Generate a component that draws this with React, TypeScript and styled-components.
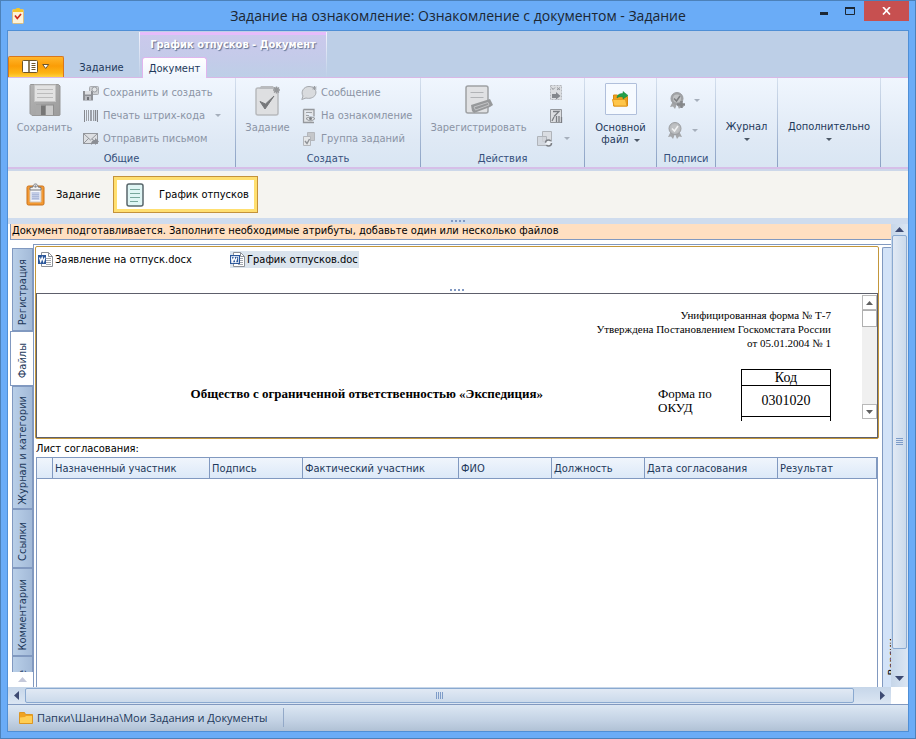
import React from 'react';
import styled, { createGlobalStyle, css } from 'styled-components';

const UI = '"DejaVu Sans Condensed", "DejaVu Sans", Tahoma, sans-serif';
const TITLE = '"Open Sans", "Segoe UI", sans-serif';
const DOC = '"Liberation Serif", "Times New Roman", serif';
const LINE = '#8199c0';
const INK = '#1e395b';
const MUTED = '#8b94a5';

const GlobalStyle = createGlobalStyle`
  * { box-sizing: border-box; }
  body { margin: 0; font: 11px/14px ${UI}; color: #000; }
  button { font: inherit; color: inherit; background: none; border: 0; padding: 0; margin: 0; text-align: center; }
  svg { display: block; flex: none; }
`;

/* Window */
const Window = styled.div`
  display: flex;
  flex-direction: column;
  height: 100vh;
  min-height: 480px;
  padding: 0 6px 6px;
  border: 1px solid #4c81b9;
  background: #6aacf7;
`;
const TitleBar = styled.header`
  display: grid;
  grid-template-columns: 1fr auto 1fr;
  height: 29px;
  flex: none;
`;
const TitleIcon = styled.div`
  padding: 6px 0 0 5px;
`;
const Title = styled.h1`
  margin: 0;
  font: 14px/29px ${TITLE};
  color: #1c2733;
  white-space: nowrap;
`;
const WindowButtons = styled.div`
  display: flex;
  justify-content: flex-end;
  align-items: flex-start;
`;
const WindowButton = styled.button<{ $close?: boolean }>`
  display: flex;
  align-items: center;
  justify-content: center;
  width: ${p => (p.$close ? 45 : 27)}px;
  height: 20px;
  background: ${p => (p.$close ? '#c75050' : 'transparent')};
`;
const Client = styled.div`
  flex: 1;
  min-height: 0;
  display: flex;
  flex-direction: column;
  border: 1px solid #4f8fd6;
  background: #fff;
`;

/* Ribbon */
const TabStrip = styled.div`
  display: flex;
  align-items: flex-end;
  flex: none;
  height: 47px;
  background: #bdcfe7;
  border-bottom: 1px solid #d9b8e6;
`;
const AppButton = styled.button`
  display: flex;
  align-items: center;
  justify-content: center;
  gap: 3px;
  width: 56px;
  height: 21px;
  border: 1px solid #d9761b;
  border-bottom: 0;
  border-radius: 2px 2px 0 0;
  background: linear-gradient(#ffb62b 0%, #fb9d06 45%, #fdb516 80%, #ffd23f 100%);
`;
const RibbonTab = styled.button<{ $active?: boolean }>`
  height: 21px;
  line-height: 22px;
  color: ${INK};
  ${p =>
    p.$active
      ? css`
          width: 65px;
          margin: 0 0 -1px 2px;
          border: 1px solid #e0b5ee;
          border-bottom: 0;
          border-radius: 3px 3px 0 0;
          background: linear-gradient(#ffffff, #eef5fd);
        `
      : css`
          width: 75px;
          line-height: 24px;
        `}
`;
const ContextGroup = styled.div`
  display: flex;
  flex-direction: column;
  justify-content: space-between;
  width: 188px;
  height: 45px;
  border: solid;
  border-width: 0 1px;
  border-image: linear-gradient(#f4f3fd, #bdcfe7) 1;
  background: linear-gradient(#e6bcfb 0 3px, #cbc9ec 3px, #c4cbe9 60%, #bdcfe7 100%);
`;
const ContextTitle = styled.div`
  padding-top: 6px;
  font-weight: bold;
  text-align: center;
  white-space: nowrap;
  color: #fff;
  text-shadow: 1px 1px 1px #5d7090;
`;
const ContextTabs = styled.div`
  display: flex;
`;
const RibbonBody = styled.div`
  display: flex;
  flex: none;
  height: 91px;
  background: linear-gradient(#f0f6fe, #dfe9f5 70%, #d9e6f3);
  border-bottom: 2px solid #d6bfe8;
`;
const Group = styled.section<{ $w: number }>`
  display: flex;
  flex-direction: column;
  width: ${p => p.$w}px;
  padding-top: 3px;
  border-right: 1px solid;
  border-image: linear-gradient(#d5e0ee, #8aa1c4) 1;
`;
const GroupItems = styled.div`
  display: flex;
  flex: none;
  height: 69px;
`;
const GroupCaption = styled.div`
  line-height: 17px;
  text-align: center;
  color: #35507c;
`;
const BigButton = styled.button<{ $w: number }>`
  display: flex;
  flex-direction: column;
  align-items: center;
  width: ${p => p.$w}px;
  padding-top: 2px;
  color: ${INK};
  line-height: 12px;
  &:disabled { color: ${MUTED}; }
`;
const BigIcon = styled.span`
  display: flex;
  align-items: center;
  justify-content: center;
  height: 34px;
  margin-bottom: 5px;
`;
const FrameIcon = styled.span`
  display: flex;
  align-items: center;
  justify-content: center;
  width: 32px;
  height: 32px;
  margin-bottom: 7px;
  border: 1px solid #b0bfdb;
  border-radius: 1px;
  background: #f6faff;
`;
const SmallColumn = styled.div`
  display: flex;
  flex-direction: column;
  flex: 1;
  align-items: flex-start;
  padding-left: 2px;
`;
const IconColumn = styled(SmallColumn)`
  padding-left: 0;
`;
const SmallButton = styled.button<{ $indent?: number; $gap?: number }>`
  display: flex;
  align-items: center;
  height: 23px;
  gap: ${p => p.$gap ?? 4}px;
  margin-left: ${p => p.$indent ?? 0}px;
  white-space: nowrap;
  &:disabled { color: ${MUTED}; }
`;
const ButtonText = styled.span`
  margin-right: 6px;
`;
const SealColumn = styled.div`
  display: flex;
  flex-direction: column;
  gap: 7px;
  padding: 8px 0 0 10px;
`;
const MenuButton = styled.button<{ $w: number }>`
  display: flex;
  flex-direction: column;
  align-items: center;
  gap: 4px;
  width: ${p => p.$w}px;
  padding-top: 39px;
  color: ${INK};
`;
const Inline = styled.span`
  display: flex;
  align-items: center;
  gap: 5px;
`;

/* Document switcher */
const Switcher = styled.nav`
  display: flex;
  align-items: center;
  flex: none;
  height: 49px;
  border-top: 2px solid #ccd7e9;
  background: #f5f4f0;
`;
const SwitchButton = styled.button<{ $active?: boolean }>`
  display: flex;
  align-items: center;
  gap: ${p => (p.$active ? 15 : 10)}px;
  height: 37px;
  white-space: nowrap;
  ${p =>
    p.$active
      ? css`
          padding: 0 5px 0 9px;
          border: 4px solid #ffdf70;
          outline: 1px solid #c4923a;
          outline-offset: -1px;
          background: #fff;
        `
      : css`
          width: 105px;
          padding-left: 18px;
        `}
`;
const Splitter = styled.div<{ $bar?: boolean }>`
  display: flex;
  justify-content: center;
  gap: 2px;
  flex: none;
  ${p =>
    p.$bar
      ? css`
          height: 6px;
          padding-top: 2px;
          background: #cfdcee;
        `
      : css`
          height: 4px;
        `}
`;
const Dot = styled.i`
  width: 2px;
  height: 2px;
  background: #8299c2;
`;

/* Scrollable area */
const Workspace = styled.div`
  flex: 1;
  min-height: 0;
  display: grid;
  grid-template: minmax(0, 1fr) 17px / minmax(0, 1fr) 17px;
`;
const Viewport = styled.div`
  display: flex;
  flex-direction: column;
  min-height: 0;
  overflow: hidden;
`;
const Notice = styled.div`
  flex: none;
  height: 16px;
  margin: 0 0 4px 2px;
  padding-left: 1px;
  border: solid ${LINE};
  border-width: 0 0 1px 1px;
  background: #ffdfc1;
  line-height: 13px;
  white-space: nowrap;
`;
const Card = styled.div`
  flex: 1;
  min-height: 0;
  display: grid;
  grid-template-columns: 25px minmax(0, 1fr);
`;
const SideTabs = styled.div`
  display: flex;
  flex-direction: column;
  align-items: flex-end;
  min-height: 0;
  padding-top: 4px;
`;
const TabsClip = styled.div`
  flex: 1;
  min-height: 0;
  overflow: hidden;
  display: flex;
  flex-direction: column;
  align-items: flex-end;
`;
const SideTab = styled.button<{ $h: number; $active?: boolean }>`
  flex: none;
  display: flex;
  align-items: center;
  justify-content: center;
  width: ${p => (p.$active ? 24 : 21)}px;
  height: ${p => p.$h}px;
  padding-top: 5px;
  margin-right: ${p => (p.$active ? -1 : 0)}px;
  border: 1px solid ${LINE};
  border-right-width: ${p => (p.$active ? 0 : 1)}px;
  background: ${p => (p.$active ? '#fff' : 'linear-gradient(90deg, #b9cfe8, #a3bad8)')};
  color: ${INK};
  white-space: nowrap;
`;
const Vertical = styled.span`
  writing-mode: vertical-rl;
  transform: rotate(180deg);
`;
const TabsScroll = styled.button`
  display: flex;
  align-items: center;
  justify-content: center;
  width: 21px;
  height: 15px;
`;
const Main = styled.div`
  display: grid;
  grid-template-columns: minmax(0, 1fr) 9px;
  column-gap: 3px;
  min-height: 0;
  border: solid ${LINE};
  border-width: 1px 0 0 1px;
`;
const Column = styled.div`
  display: flex;
  flex-direction: column;
  min-height: 0;
  padding: 1px 0 0 1px;
`;
const RightPanel = styled.aside`
  display: flex;
  align-items: flex-end;
  min-height: 0;
  margin-top: 2px;
  padding: 0 0 12px 3px;
  overflow: hidden;
  border: solid ${LINE};
  border-width: 1px 0 0 1px;
  border-radius: 2px 0 0 0;
  background: #d3e3f8;
  white-space: nowrap;
`;
const FilesPanel = styled.section`
  flex: none;
  border: 1px solid #c3973c;
  border-radius: 2px;
`;
const FileList = styled.div`
  display: flex;
  height: 42px;
  padding: 4px 0 0 2px;
`;
const FileCell = styled.div`
  width: 192px;
`;
const FileButton = styled.button<{ $active?: boolean }>`
  display: flex;
  align-items: center;
  height: 17px;
  padding-right: 1px;
  gap: 2px;
  white-space: nowrap;
  background: ${p => (p.$active ? '#dbe4ed' : 'transparent')};
`;
const Preview = styled.div`
  display: grid;
  grid-template-columns: minmax(0, 1fr) 15px;
  height: 145px;
  padding-bottom: 16px;
  border: 1px solid #5d5f6b;
`;
const Page = styled.article`
  min-height: 0;
  overflow: hidden;
  padding: 14px 31px 0 0;
  font: 11px/14px ${DOC};
  text-align: right;
`;
const FormHead = styled.p`
  margin: 0 0 19px;
`;
const FormRow = styled.div`
  display: flex;
  justify-content: flex-end;
`;
const Organization = styled.strong`
  margin: 18px 115px 0 0;
  font-size: 13px;
  white-space: nowrap;
`;
const FormLabel = styled.span`
  width: 83px;
  padding-top: 18px;
  padding-right: 20px;
  font-size: 13px;
  text-align: left;
`;
const CodeTable = styled.table`
  width: 90px;
  border-collapse: collapse;
  font-size: 14px;
  text-align: center;
  th, td { padding: 0; border: 1px solid #000; font-weight: normal; }
  th { height: 16px; line-height: 15px; }
  td { height: 31px; }
`;
const PreviewScroll = styled.div`
  display: flex;
  flex-direction: column;
  margin: 1px 0 2px;
  background: #f0f0f0;
`;
const PreviewArrow = styled.button`
  display: flex;
  align-items: center;
  justify-content: center;
  height: 15px;
  border: 1px solid #b9b9b9;
  background: #fff;
`;
const PreviewThumb = styled.div`
  height: 17px;
  margin-bottom: auto;
  border: 1px solid #b0b0b0;
  background: #fff;
`;
const ListLabel = styled.div`
  flex: none;
  height: 18px;
  padding-left: 1px;
  line-height: 20px;
`;
const GridBox = styled.div`
  flex: 1;
  min-height: 0;
  margin: 0 1px;
  border: solid ${LINE};
  border-width: 1px 1px 0;
`;
const Grid = styled.table`
  width: 100%;
  table-layout: fixed;
  border-collapse: separate;
  border-spacing: 0;
`;
const HeadCell = styled.th<{ $w?: number }>`
  width: ${p => (p.$w ? p.$w + 'px' : 'auto')};
  height: 21px;
  padding: 1px 2px 0;
  border: solid ${LINE};
  border-width: 0 1px 1px 0;
  background: linear-gradient(#f0f5fc, #dce9f8);
  color: ${INK};
  font-weight: normal;
  text-align: left;
  white-space: nowrap;
`;

/* Scroll bars */
const VScroll = styled.div`
  display: flex;
  flex-direction: column;
  background: linear-gradient(90deg, #c6d6e9, #dbe6f3);
`;
const HScroll = styled.div`
  display: flex;
  background: linear-gradient(#c6d6e9, #dbe6f3);
`;
const ScrollArrow = styled.button<{ $end?: boolean }>`
  display: flex;
  flex: none;
  align-items: center;
  justify-content: center;
  min-width: 17px;
  min-height: ${p => (p.$end ? 17 : 11)}px;
`;
const VThumb = styled.div`
  display: flex;
  align-items: center;
  justify-content: center;
  flex: 1;
  margin: 0 1px 21px;
  border: 1px solid #8aa9d0;
  border-radius: 2px;
  background: linear-gradient(90deg, #e1e9f4, #cbdaeb);
`;
const HThumb = styled(VThumb)`
  margin: 1px 20px 1px 0;
  background: linear-gradient(#e1e9f4, #cbdaeb);
`;

const StatusBar = styled.footer`
  display: flex;
  flex: none;
  height: 27px;
  border-top: 1px solid ${LINE};
  background: linear-gradient(#dce7f3, #c3d2e4 60%, #b0c1d5);
`;
const PathItem = styled.a`
  display: flex;
  align-items: center;
  gap: 4px;
  margin: 3px 0 4px;
  padding: 0 16px 0 11px;
  border-right: 1px solid #93a9c8;
  font: 11px/18px ${TITLE};
  color: ${INK};
  text-decoration: none;
`;

/* Glyphs */
const Caret = ({ color = '#4d5866' }: { color?: string }) => (
  <svg width="6" height="3" viewBox="0 0 6 3"><path d="M0 0h6L3 3z" fill={color} /></svg>
);
const DIM = '#a6afbc';

const arrows = {
  up: 'M4.5 0 9 5H0z', down: 'M0 0h9L4.5 5z', left: 'M5 0v9L0 4.5z', right: 'M0 0l5 4.5L0 9z',
};
const Arrow = ({ dir, color = '#3d4a72', small }: { dir: keyof typeof arrows; color?: string; small?: boolean }) => {
  const side = dir === 'left' || dir === 'right';
  const w = side ? 5 : 9;
  const h = side ? 9 : 5;
  return (
    <svg width={small ? w - 2 : w} height={small ? h - 1 : h} viewBox={`0 0 ${w} ${h}`}>
      <path d={arrows[dir]} fill={color} />
    </svg>
  );
};
const Grip = ({ vertical }: { vertical?: boolean }) => (
  <svg width="8" height="8" viewBox="0 0 8 8">
    <path
      d={vertical ? 'M.5 0v7M2.5 0v7M4.5 0v7M6.5 0v7' : 'M0 .5h7M0 2.5h7M0 4.5h7M0 6.5h7'}
      stroke="#7e9cc8"
    />
  </svg>
);
const Dots = () => (
  <><Dot /><Dot /><Dot /><Dot /></>
);

const TaskIcon = () => (
  <svg width="13" height="17" viewBox="0 0 13 17">
    <rect x=".5" y="2.5" width="11" height="14" rx="1" fill="#fdf3d8" stroke="#d9bd82" />
    <path d="M1 5V2.500h2.500L4.500 1h3l1 1.500H11V5z" fill="#f4c52b" />
    <path d="M3 8.500l2.300 3L9 7" fill="none" stroke="#cf2a1e" strokeWidth="1.700" />
  </svg>
);
const FloppyIcon = () => (
  <svg width="32" height="32" viewBox="0 0 32 32">
    <defs>
      <linearGradient id="floppy" x1="0" y1="0" x2="1" y2="1">
        <stop offset="0" stopColor="#b4b4b4" /><stop offset="1" stopColor="#9c9c9c" />
      </linearGradient>
    </defs>
    <path d="M1.500.500h28l1.500 1.500v29l-1 .5H3l-2-2V1.500z" fill="url(#floppy)" stroke="#979797" />
    <rect x="5.500" y="1" width="21" height="16.500" fill="#e2e2e2" stroke="#c4c4c4" />
    <path d="M8 5.500h16M8 9.500h16M8 13.500h16" stroke="#bcbcbc" />
    <path d="M7 20.500h18V31H7z" fill="#8f8f8f" />
    <path d="M7 20.500h5V31H7z" fill="#a9a9a9" />
    <path d="M17 21.500h7V31h-7z" fill="#c9c9c9" />
    <path d="M12 22h4v9h-4z" fill="#767676" />
  </svg>
);
const SaveNewIcon = () => (
  <svg width="16" height="16" viewBox="0 0 16 16">
    <rect x="6.500" y="1.500" width="9" height="8" rx="1" fill="#cfd1d4" stroke="#a9acb1" />
    <circle cx="11.500" cy="4.500" r="2.500" fill="#e3e5e7" stroke="#9b9ea3" />
    <path d="M0 6h9l1 1v8.500H0z" fill="#8e9095" />
    <path d="M2 6h6v3.500H2z" fill="#dfe1e4" /><path d="M2 11h6v4H2z" fill="#b9bbc0" /><path d="M4 12h2v3H4z" fill="#6f7176" />
  </svg>
);
const BarcodeIcon = () => (
  <svg width="16" height="16" viewBox="0 0 16 16">
    <path d="M1.500 2v12M14.500 2v12" stroke="#85888e" />
    <path d="M3.500 2v11M5.500 2v11M10.500 2v11" stroke="#9b9ea4" />
    <path d="M8 2v11M12.500 2v11" stroke="#85888e" strokeWidth="1.500" />
  </svg>
);
const MailIcon = () => (
  <svg width="16" height="16" viewBox="0 0 16 16">
    <rect x=".5" y="2.500" width="14" height="10" fill="#dddfe2" stroke="#94979c" />
    <path d="M1 3l6.500 6L14 3M1 12l5-5M14 12L9 8" fill="none" stroke="#94979c" />
    <path d="M8 14c0-4 2-5 4-5V7l4 3.500-4 3.500v-2c-2 0-3 1-4 2z" fill="#8b8e94" />
  </svg>
);
const TaskGrayIcon = () => (
  <svg width="26" height="32" viewBox="0 0 26 32">
    <rect x="1" y="4" width="22" height="27" rx="2" fill="#dedfe1" stroke="#b8babd" strokeWidth="1.500" />
    <path d="M4 5l2-3h12l2 3z" fill="#b9bbbe" />
    <path d="M5 17.500l5 7.500 9-13-8.500 8z" fill="#76787b" stroke="#76787b" />
    <path d="M21.500 2.500v7M18 6h7M19 3.500l5 5M24 3.500l-5 5" stroke="#96989b" strokeWidth="1.500" />
  </svg>
);
const BubbleIcon = () => (
  <svg width="16" height="16" viewBox="0 0 16 16">
    <path d="M.800 14.500L2 11C-.5 7 2.500 1.500 8 1.500S16 6 14.500 9.500 8 14 5 13z" fill="#d9dbde" stroke="#a5a8ad" />
    <path d="M13.500 1v4M11.500 3h4M12 1.500l3 3M15 1.500l-3 3" stroke="#9a9da2" />
  </svg>
);
const ReviewIcon = () => (
  <svg width="16" height="16" viewBox="0 0 16 16">
    <path d="M2.500 1.500h10.500v7M2.500 1.500v13h10.500" fill="#e1e3e6" stroke="#95989d" strokeWidth="1.300" />
    <path d="M5 4.500h6M5 7.500h3" stroke="#9fa2a7" />
    <path d="M5 10.500c3-2 6-2 9 0-3 3-6 3-9 0z" fill="#e6e8ea" stroke="#8d9095" /><circle cx="9.500" cy="10.500" r="1.500" fill="#7b7e83" />
  </svg>
);
const TaskGroupIcon = () => (
  <svg width="16" height="16" viewBox="0 0 16 16">
    <path d="M6.500 1.500h7v8h-7z" fill="#c5c7ca" stroke="#b4b7bc" />
    <path d="M2.500 5.500h7v9h-7z" fill="#e4e6e8" stroke="#b4b7bc" /><path d="M4 10l2 2.500 2.500-4.500" fill="none" stroke="#8f9297" strokeWidth="1.400" />
  </svg>
);
const RegisterIcon = () => (
  <svg width="28" height="30" viewBox="0 0 28 30">
    <rect x="1" y="1" width="22" height="27" rx="2" fill="#e0e1e3" stroke="#9fa1a4" strokeWidth="1.500" />
    <path d="M5.500 7.500h13M5.500 12.500h13" stroke="#b1b3b6" />
    <path d="M6 20l19-6 3 6-3 2-16 6-2-2z" fill="#97999b" /><path d="M9 22l14-4.500 1 2.500-13.500 5z" fill="none" stroke="#c2c3c5" />
  </svg>
);
const TransferIcon = () => (
  <svg width="16" height="16" viewBox="0 0 16 16">
    <path d="M2.500.500h11v14h-11z" fill="#dcdee1" stroke="#b4b7bc" strokeDasharray="2 1" />
    <path d="M3.500 2.500l1.500 2 2-2M9 2.500l3 2.500M12 2.500L9 5" fill="none" stroke="#94979c" />
    <path d="M4 9h4V7l4.500 4L8 14.500V13H4z" fill="#84878c" />
  </svg>
);
const SortIcon = () => (
  <svg width="16" height="16" viewBox="0 0 16 16">
    <path d="M2.500 1.500h11v13h-11z" fill="#dcdee1" stroke="#94979c" />
    <path d="M5 3.500h6l-5 5M4 13l2-4M8.500 8v6M11 8v6M13.500 9v6" fill="none" stroke="#7a7d82" strokeWidth="1.300" />
  </svg>
);
const ShapesIcon = () => (
  <svg width="18" height="18" viewBox="0 0 18 18">
    <path d="M6.500 1.500h9v10h-9z" fill="#dadde2" stroke="#b0b4ba" />
    <path d="M1.500 6.500h9v9h-9z" fill="#cfd3d9" fillOpacity=".8" stroke="#b0b4ba" />
    <circle cx="12.500" cy="13" r="3" fill="#eef2f7" stroke="#7d8086" strokeWidth="1.500" strokeDasharray="7 2.400" />
  </svg>
);
const FolderOutIcon = () => (
  <svg width="17" height="16" viewBox="0 0 17 16">
    <path d="M1.500 4h4l1 1.500h9V15h-14z" fill="#f0a01c" stroke="#d88912" />
    <path d="M.5 8.500h13l1.500 6.500H2z" fill="#ffc64a" stroke="#e39a1e" />
    <path d="M5 7c0-3.500 3-4.500 6-4.500V.500l5 4-5 3.500V6C8.500 5.500 6.500 5.500 5 7z" fill="#23a04a" stroke="#148038" strokeWidth=".5" />
  </svg>
);
const SealIcon = ({ add }: { add?: boolean }) => (
  <svg width="17" height="17" viewBox="0 0 17 17">
    <path d="M4 9l-3 6 3-.5L6 17l2-5 2 5 2-2.500 3 .5-3-6z" fill="#a4a6a9" />
    <circle cx="8" cy="6.500" r="6" fill={add ? '#a0a2a5' : '#b9bbbe'} stroke="#9b9da0" />
    <circle cx="8" cy="6.500" r="4" fill="#c0c2c4" />
    <path d="M5 6.500l2.500 2.500L11 4" fill="none" stroke={add ? '#7d7f82' : '#f0f1f2'} strokeWidth="1.500" />
    {add && <path d="M8 12.500h8M12.500 9v7" stroke="#85878a" strokeWidth="2.500" />}
  </svg>
);
const ClipboardIcon = () => (
  <svg width="20" height="23" viewBox="0 0 20 23">
    <rect x="1" y="3" width="17" height="19" rx="1.500" fill="#f49a33" stroke="#c9711b" />
    <path d="M4 6h11v13H4z" fill="#f4f6fb" stroke="#d2c3b4" />
    <path d="M5.500 9h8v8h-8z" fill="#c3cde6" /><path d="M6 11.500h7M6 13.500h7M6 15.500h7" stroke="#acb9da" />
    <path d="M4 7V4.500L7 4c0-4 5-4 5 0l3 .5V7z" fill="#f2f2f2" stroke="#77797e" />
    <circle cx="9.500" cy="3.500" r="1.200" fill="#8b8d92" />
  </svg>
);
const SheetIcon = () => (
  <svg width="18" height="24" viewBox="0 0 18 24">
    <rect x="1" y="1" width="16" height="22" rx="2" fill="#dff5f4" stroke="#58666b" strokeWidth="1.500" />
    <path d="M4 6.500h10M4 10.500h10M4 14.500h10M4 18.500h8" stroke="#77a79c" />
  </svg>
);
const WordIcon = ({ old }: { old?: boolean }) => (
  <svg width="15" height="16" viewBox="0 0 15 16">
    <path d="M3.500.500h7l4 4v10h-11z" fill="#fff" stroke="#8d9197" />
    <path d="M10.500.500v4h4" fill="none" stroke="#8d9197" />
    <path d="M8 6.500h5M8 8.500h5M8 10.500h5M8 12.500h5" stroke="#a2a7ae" />
    <rect y="3" width={old ? 10 : 8} height="9" fill="#2b579a" />
    {old && <rect x="1.500" y="4.500" width="7" height="6" fill="none" stroke="#c9d6ea" />}
    <path d="M1.500 5.500l1.200 4 1.500-4 1.500 4 1.200-4" fill="none" stroke="#fff" strokeWidth="1.200" />
  </svg>
);
const FolderIcon = () => (
  <svg width="14" height="12" viewBox="0 0 14 12">
    <path d="M.5.500h5l1 2h7v9H.5z" fill="#f0a322" stroke="#dc9622" />
    <path d="M1 5.500l5-.5 1-1h6v7H1z" fill="#ffce54" />
  </svg>
);

const columns: [string, number?][] = [
  ['', 16], ['Назначенный участник', 157], ['Подпись', 93], ['Фактический участник', 156],
  ['ФИО', 93], ['Должность', 93], ['Дата согласования', 133], ['Результат'],
];
const sideTabs: [string, number][] = [
  ['Регистрация', 83], ['Файлы', 55], ['Журнал и категории', 123], ['Ссылки', 59], ['Комментарии', 88], ['Прочее', 60],
];

export default function App() {
  return (
    <>
      <GlobalStyle />
      <Window>
        <TitleBar>
          <TitleIcon><TaskIcon /></TitleIcon>
          <Title>Задание на ознакомление: Ознакомление с документом - Задание</Title>
          <WindowButtons>
            <WindowButton aria-label="Свернуть">
              <svg width="8" height="9"><path d="M0 5h8v3H0z" fill="#1c2733" /></svg>
            </WindowButton>
            <WindowButton aria-label="Развернуть">
              <svg width="11" height="9"><path d="M.5 1v6.500h9V1" fill="none" stroke="#1c2733" /><path d="M0 0h10v2H0z" fill="#1c2733" /></svg>
            </WindowButton>
            <WindowButton $close aria-label="Закрыть">
              <svg width="9" height="8"><path d="M1 0l7 7.500M8 0L1 7.500" stroke="#fff" strokeWidth="1.700" /></svg>
            </WindowButton>
          </WindowButtons>
        </TitleBar>

        <Client>
          <TabStrip>
            <AppButton aria-label="Меню">
              <svg width="17" height="14" viewBox="0 0 17 14">
                <rect x=".5" y=".5" width="15" height="12" rx="1" fill="#fff" stroke="#6d5529" />
                <path d="M7 1v12" stroke="#6d5529" strokeWidth="1.500" />
                <path d="M9.500 3.500h4M9.500 5.500h4M9.500 7.500h4M9.500 9.500h4" stroke="#6d5529" />
              </svg>
              <svg width="8" height="6"><path d="M.7.500h6L3.700 4.500z" fill="#fff" stroke="#6d5529" /></svg>
            </AppButton>
            <RibbonTab>Задание</RibbonTab>
            <ContextGroup>
              <ContextTitle>График отпусков - Документ</ContextTitle>
              <ContextTabs><RibbonTab $active>Документ</RibbonTab></ContextTabs>
            </ContextGroup>
          </TabStrip>

          <RibbonBody>
            <Group $w={228}>
              <GroupItems>
                <BigButton $w={73} disabled><BigIcon><FloppyIcon /></BigIcon>Сохранить</BigButton>
                <SmallColumn>
                  <SmallButton disabled><SaveNewIcon />Сохранить и создать</SmallButton>
                  <SmallButton disabled><BarcodeIcon /><ButtonText>Печать штрих-кода</ButtonText><Caret color={DIM} /></SmallButton>
                  <SmallButton disabled><MailIcon />Отправить письмом</SmallButton>
                </SmallColumn>
              </GroupItems>
              <GroupCaption>Общие</GroupCaption>
            </Group>
            <Group $w={185}>
              <GroupItems>
                <BigButton $w={63} disabled><BigIcon><TaskGrayIcon /></BigIcon>Задание</BigButton>
                <SmallColumn>
                  <SmallButton disabled><BubbleIcon />Сообщение</SmallButton>
                  <SmallButton disabled><ReviewIcon />На ознакомление</SmallButton>
                  <SmallButton disabled><TaskGroupIcon />Группа заданий</SmallButton>
                </SmallColumn>
              </GroupItems>
              <GroupCaption>Создать</GroupCaption>
            </Group>
            <Group $w={164}>
              <GroupItems>
                <BigButton $w={115} disabled><BigIcon><RegisterIcon /></BigIcon>Зарегистрировать</BigButton>
                <IconColumn>
                  <SmallButton $indent={12} disabled aria-label="Передать"><TransferIcon /></SmallButton>
                  <SmallButton $indent={12} disabled aria-label="Нумерация"><SortIcon /></SmallButton>
                  <SmallButton $gap={10} disabled aria-label="Состояние"><ShapesIcon /><Caret color={DIM} /></SmallButton>
                </IconColumn>
              </GroupItems>
              <GroupCaption>Действия</GroupCaption>
            </Group>
            <Group $w={72}>
              <BigButton $w={71}>
                <FrameIcon><FolderOutIcon /></FrameIcon>
                Основной
                <Inline>файл <Caret /></Inline>
              </BigButton>
            </Group>
            <Group $w={59}>
              <GroupItems>
                <SealColumn>
                  <SmallButton $gap={8} $indent={2} disabled aria-label="Подписать"><SealIcon add /><Caret color={DIM} /></SmallButton>
                  <SmallButton $gap={8} disabled aria-label="Проверить подпись"><SealIcon /><Caret color={DIM} /></SmallButton>
                </SealColumn>
              </GroupItems>
              <GroupCaption>Подписи</GroupCaption>
            </Group>
            <Group $w={62}><MenuButton $w={61}>Журнал<Caret /></MenuButton></Group>
            <Group $w={103}><MenuButton $w={102}>Дополнительно<Caret /></MenuButton></Group>
          </RibbonBody>

          <Switcher>
            <SwitchButton><ClipboardIcon />Задание</SwitchButton>
            <SwitchButton $active><SheetIcon />График отпусков</SwitchButton>
          </Switcher>
          <Splitter $bar><Dots /></Splitter>

          <Workspace>
            <Viewport>
              <Notice>Документ подготавливается. Заполните необходимые атрибуты, добавьте один или несколько файлов</Notice>
              <Card>
                <SideTabs>
                  <TabsClip role="tablist">
                    {sideTabs.map(([label, h]) => (
                      <SideTab key={label} role="tab" $h={h} $active={label === 'Файлы'} aria-selected={label === 'Файлы'}>
                        <Vertical>{label}</Vertical>
                      </SideTab>
                    ))}
                  </TabsClip>
                  <TabsScroll aria-label="Прокрутить вкладки"><Arrow dir="up" color="#c5c9da" /></TabsScroll>
                </SideTabs>
                <Main>
                  <Column>
                    <FilesPanel>
                      <FileList>
                        <FileCell><FileButton><WordIcon />Заявление на отпуск.docx</FileButton></FileCell>
                        <FileCell><FileButton $active><WordIcon old />График отпусков.doc</FileButton></FileCell>
                      </FileList>
                      <Splitter><Dots /></Splitter>
                      <Preview>
                        <Page>
                          <FormHead>
                            Унифицированная форма № Т-7<br />
                            Утверждена Постановлением Госкомстата России<br />
                            от 05.01.2004 № 1
                          </FormHead>
                          <FormRow>
                            <Organization>Общество с ограниченной ответственностью «Экспедиция»</Organization>
                            <FormLabel>Форма по ОКУД</FormLabel>
                            <CodeTable>
                              <thead><tr><th>Код</th></tr></thead>
                              <tbody><tr><td>0301020</td></tr><tr><td /></tr></tbody>
                            </CodeTable>
                          </FormRow>
                        </Page>
                        <PreviewScroll>
                          <PreviewArrow aria-label="Вверх"><Arrow small dir="up" color="#606060" /></PreviewArrow>
                          <PreviewThumb />
                          <PreviewArrow aria-label="Вниз"><Arrow small dir="down" color="#606060" /></PreviewArrow>
                        </PreviewScroll>
                      </Preview>
                    </FilesPanel>
                    <ListLabel id="approval-list">Лист согласования:</ListLabel>
                    <GridBox>
                      <Grid aria-labelledby="approval-list">
                        <thead>
                          <tr>{columns.map(([name, w], i) => <HeadCell key={i} $w={w}>{name}</HeadCell>)}</tr>
                        </thead>
                      </Grid>
                    </GridBox>
                  </Column>
                  <RightPanel><Vertical>Версии</Vertical></RightPanel>
                </Main>
              </Card>
            </Viewport>
            <VScroll>
              <ScrollArrow aria-label="Вверх"><Arrow dir="up" /></ScrollArrow>
              <VThumb><Grip /></VThumb>
              <ScrollArrow $end aria-label="Вниз"><Arrow dir="down" /></ScrollArrow>
            </VScroll>
            <HScroll>
              <ScrollArrow aria-label="Влево"><Arrow dir="left" /></ScrollArrow>
              <HThumb><Grip vertical /></HThumb>
              <ScrollArrow aria-label="Вправо"><Arrow dir="right" /></ScrollArrow>
            </HScroll>
          </Workspace>

          <StatusBar>
            <PathItem href="#folder"><FolderIcon />Папки\Шанина\Мои Задания и Документы</PathItem>
          </StatusBar>
        </Client>
      </Window>
    </>
  );
}
